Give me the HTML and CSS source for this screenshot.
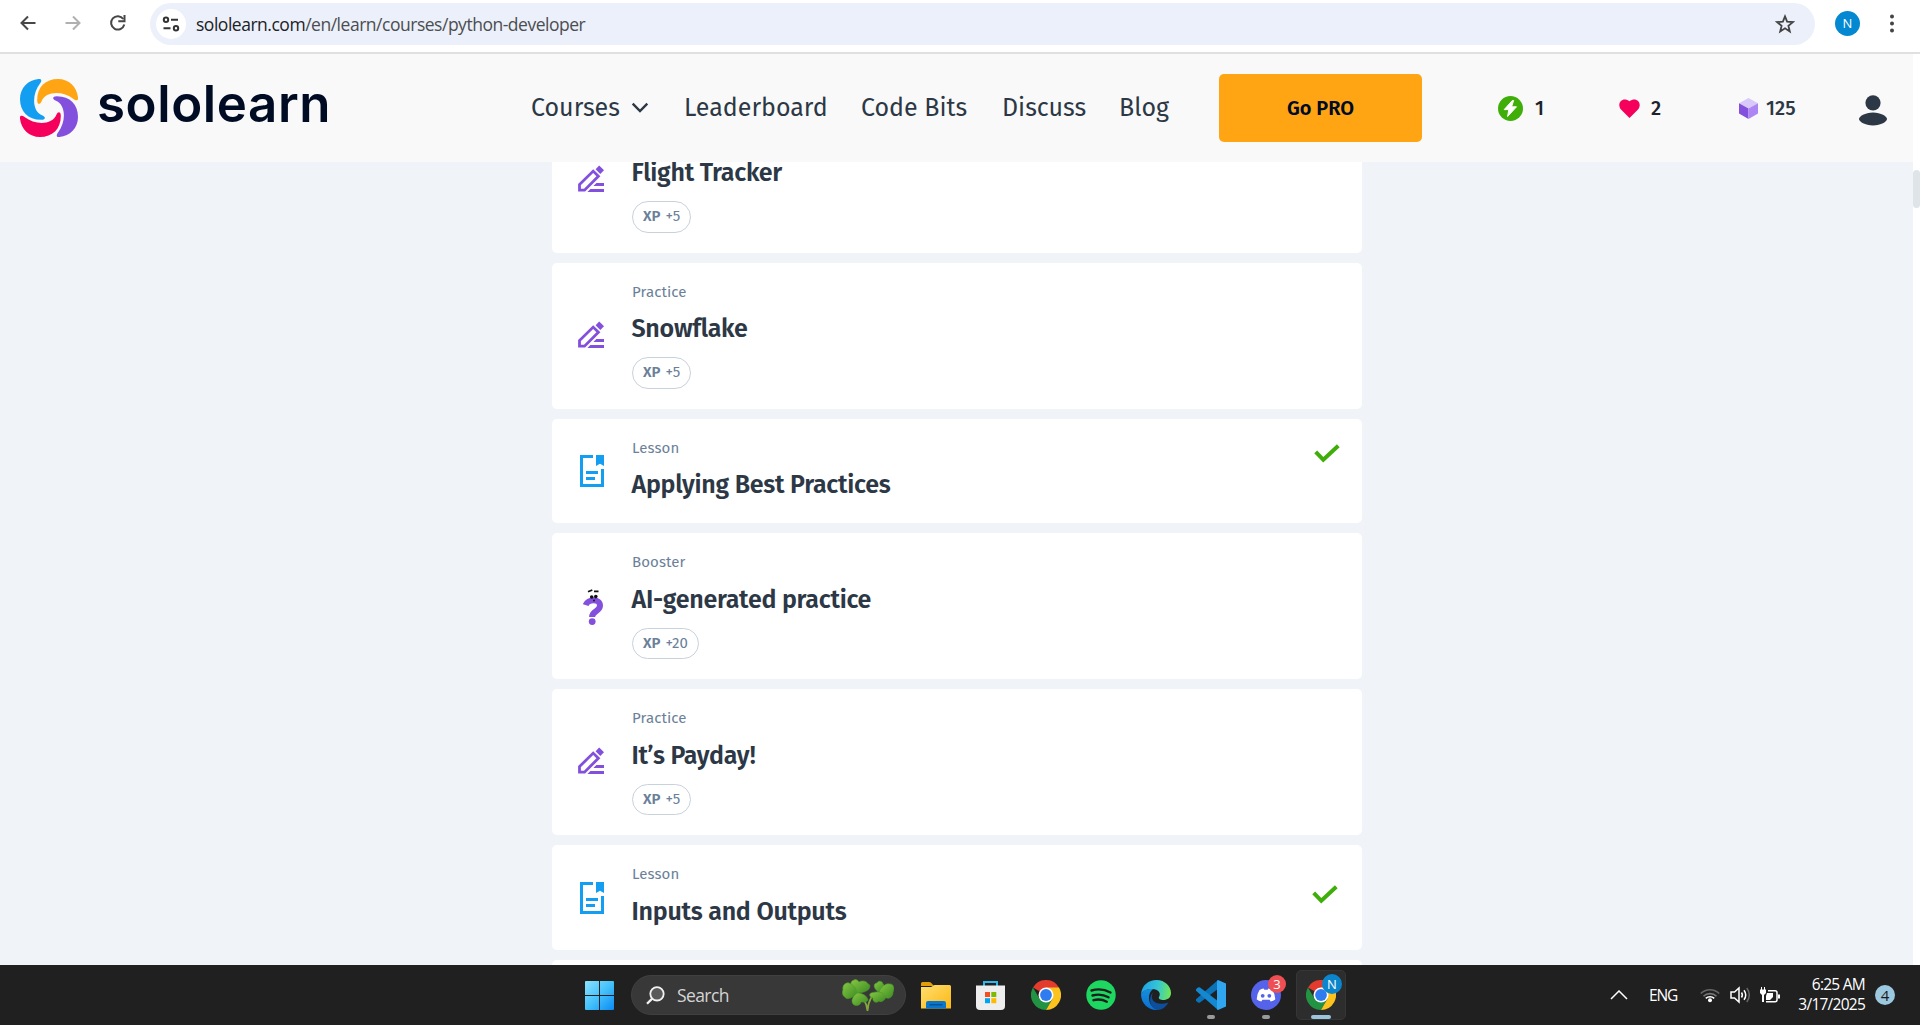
FILE: index.html
```
<!DOCTYPE html>
<html lang="en">
<head>
<meta charset="utf-8">
<title>Python Developer</title>
<link rel="stylesheet" href="styles.css">
</head>
<body>
<svg class="defs" width="0" height="0" aria-hidden="true">
  <defs>
    <symbol id="pencil" viewBox="0 0 26 27">
      <path d="M17.6 4.2 21.2.5 26 5.3 22.3 9Z" fill="#8250dc"/>
      <path d="M1.5 25.2V19.6L15.2 6.1 20.4 11.2 6.5 25.2Z" fill="none" stroke="#8250dc" stroke-width="2.8"/>
      <path d="M18.4 18H26v3H15.4ZM12.4 24H26v3H9.4Z" fill="#8250dc"/>
    </symbol>
    <symbol id="lesson" viewBox="0 0 24 32">
      <path d="M13 1.5H1.5v29h21V14" fill="none" stroke="#149ef2" stroke-width="3"/>
      <path d="M16 0h8v11l-4-2.2-4 2.2ZM6 16h12v3H6ZM6 22h9v3H6Z" fill="#149ef2"/>
    </symbol>
    <symbol id="check" viewBox="0 0 26 19">
      <path d="M1.7 7.8 9.3 15.8 24.3 1.8" fill="none" stroke="#3fae09" stroke-width="4"/>
    </symbol>
    <symbol id="chrome" viewBox="0 0 30 30">
      <path d="M15 15 2 7.5A15 15 0 0 1 28 7.5Z" fill="#e33b2e"/>
      <path d="M2 7.5A15 15 0 0 0 15 30L21.5 18.7 8.5 18.7Z" fill="#229342"/>
      <path d="M28 7.5A15 15 0 0 1 15 30L21.5 18.7 15 7.5Z" fill="#fcc31e"/>
      <circle cx="15" cy="15" r="7.5" fill="#fff"/>
      <circle cx="15" cy="15" r="5.9" fill="#2f7cf0"/>
    </symbol>
  </defs>
</svg>

<div class="toolbar">
  <svg class="tb-back" width="18" height="18" viewBox="0 0 18 18"><path d="M16.5 9H3M9 2.5 2.5 9 9 15.5" fill="none" stroke="#474747" stroke-width="2"/></svg>
  <svg class="tb-forward" width="18" height="18" viewBox="0 0 18 18"><path d="M1.5 9H15M9 2.5 15.500 9 9 15.500" fill="none" stroke="#b0b0b0" stroke-width="2"/></svg>
  <svg class="tb-reload" width="18" height="18" viewBox="0 0 18 18"><path d="M14.3 5A6.700 6.700 0 1 0 15.300 10.500" fill="none" stroke="#474747" stroke-width="2"/><path d="M15.500 1v6.200H9.300" fill="none" stroke="#474747" stroke-width="2"/></svg>
  <div class="omnibox">
    <span class="site-info">
      <svg width="18" height="16" viewBox="0 0 18 16" fill="none" stroke="#333" stroke-width="2"><circle cx="4" cy="3.700" r="2.200"/><path d="M9 3.700h7M1.500 12.300h7"/><circle cx="14" cy="12.300" r="2.200"/></svg>
    </span>
    <span class="url">sololearn.com<span class="url-path">/en/learn/courses/python-developer</span></span>
    <svg class="star" width="20" height="20" viewBox="0 0 20 20"><path d="m10 2.400 2.100 5.300 5.700.4-4.400 3.700 1.400 5.600L10 14.300 5.200 17.400l1.400-5.600L2.200 8.100l5.700-.4Z" fill="none" stroke="#444" stroke-width="1.800"/></svg>
  </div>
  <span class="profile">N</span>
  <svg class="kebab" width="6" height="20" viewBox="0 0 6 20" fill="#444"><circle cx="3" cy="2.500" r="2"/><circle cx="3" cy="9.500" r="2"/><circle cx="3" cy="16.500" r="2"/></svg>
</div>

<div class="viewport">
<div class="page">
  <header class="header">
    <div class="brand">
      <svg width="58" height="58" viewBox="0 0 58 58">
        <defs><path id="blade" d="M18.500 0C22-.4 21.800 2.200 20 4.500 11.500 15.500 12 32.500 22.500 36.500 26 38 25.500 40.800 21.500 40.800 8 41 0 32.500 0 20 0 9 8 1 18.500 0Z"/></defs>
        <use href="#blade" fill="#149ef2"/>
        <use href="#blade" fill="#ffa514" transform="rotate(90 29 29)"/>
        <use href="#blade" fill="#8250dc" transform="rotate(180 29 29)"/>
        <use href="#blade" fill="#f5005a" transform="rotate(270 29 29)"/>
      </svg>
      <span class="wordmark">sololearn</span>
    </div>
    <nav class="nav">
      <a class="nav-courses">Courses <svg width="18" height="11" viewBox="0 0 18 11"><path d="M1.700 1.700 9 9l7.300-7.300" fill="none" stroke="#2d3846" stroke-width="2.400"/></svg></a>
      <a>Leaderboard</a>
      <a>Code Bits</a>
      <a>Discuss</a>
      <a>Blog</a>
    </nav>
    <button class="pro">Go PRO</button>
    <div class="stats">
      <span class="stat stat-streak"><svg width="25" height="25" viewBox="0 0 25 25"><circle cx="12.500" cy="12.500" r="12.500" fill="#3fae09"/><path d="M14.300 4.500 6.200 13.600h4.600L9.600 20.500l8.900-9.700h-4.900l2-6.300Z" fill="#fff" stroke="#fff" stroke-linejoin="round"/></svg>1</span>
      <span class="stat stat-hearts"><svg width="21" height="19" viewBox="0 0 21 19"><path d="M10.500 19 2 10.500C-3 4 4-3 10.500 2.300 17-3 24 4 19 10.500Z" fill="#f5005a"/></svg>2</span>
      <span class="stat stat-bits"><svg width="19" height="21" viewBox="0 0 19 21"><path d="M9.500 0 19 5.200 9.500 10.500 0 5.200Z" fill="#d9c8fa"/><path d="M0 5.200 9.500 10.500V21L0 15.500Z" fill="#8250dc"/><path d="M19 5.200 9.500 10.500V21L19 15.500Z" fill="#ad85f5"/></svg>125</span>
    </div>
    <svg class="user" width="28" height="31" viewBox="0 0 28 31" fill="#2d3846"><circle cx="14" cy="7.800" r="7.600"/><path d="M14 17.500c8 0 14 4 14 6.500S22 30.500 14 30.500 0 26.500 0 24s6-6.500 14-6.500Z"/></svg>
  </header>

  <main class="lessons">
    <article class="card">
      <svg class="icon" width="26" height="27"><use href="#pencil"/></svg>
      <div class="body"><p class="kind">Practice</p><h3>Flight Tracker</h3><span class="xp"><b>XP</b>+5</span></div>
    </article>
    <article class="card">
      <svg class="icon" width="26" height="27"><use href="#pencil"/></svg>
      <div class="body"><p class="kind">Practice</p><h3>Snowflake</h3><span class="xp"><b>XP</b>+5</span></div>
    </article>
    <article class="card card-short">
      <svg class="icon icon-lesson" width="24" height="32"><use href="#lesson"/></svg>
      <div class="body"><p class="kind">Lesson</p><h3>Applying Best Practices</h3></div>
      <svg class="done" width="26" height="19"><use href="#check"/></svg>
    </article>
    <article class="card card-low">
      <svg class="icon icon-booster" width="21" height="36" viewBox="0 0 21 36">
        <path d="M2.700 16.200C4.700 9.800 17 9.500 17 16.600c0 6-7.900 5.400-7.900 11.400" fill="none" stroke="#8250dc" stroke-width="6"/>
        <circle cx="9.200" cy="32.600" r="3.400" fill="#8250dc"/>
        <path d="M5 2.800 9.300 1M11 2.300h4.500" stroke="#111" stroke-width="1.700" fill="none"/>
        <circle cx="8.700" cy="8" r="1.800" fill="#111"/><circle cx="12.800" cy="7.600" r="1.800" fill="#111"/><circle cx="11" cy="11.500" r=".9" fill="#111"/>
      </svg>
      <div class="body"><p class="kind">Booster</p><h3>AI-generated practice</h3><span class="xp"><b>XP</b>+20</span></div>
    </article>
    <article class="card card-low">
      <svg class="icon" width="26" height="27"><use href="#pencil"/></svg>
      <div class="body"><p class="kind">Practice</p><h3>It’s Payday!</h3><span class="xp"><b>XP</b>+5</span></div>
    </article>
    <article class="card card-short card-low card-last">
      <svg class="icon icon-lesson" width="24" height="32"><use href="#lesson"/></svg>
      <div class="body"><p class="kind">Lesson</p><h3>Inputs and Outputs</h3></div>
      <svg class="done" width="26" height="19"><use href="#check"/></svg>
    </article>
    <article class="card"></article>
  </main>
</div>
<div class="scrollbar"><span class="thumb"></span></div>
</div>

<footer class="taskbar">
  <div class="apps">
    <svg class="start" width="29" height="29" viewBox="0 0 29 29">
      <defs><linearGradient id="win" x1="0" y1="0" x2="29" y2="29" gradientUnits="userSpaceOnUse"><stop offset="0" stop-color="#8be3ff"/><stop offset=".5" stop-color="#45c1fb"/><stop offset="1" stop-color="#0b8bf5"/></linearGradient></defs>
      <path d="M0 1q0-1 1-1H14v14H0ZM15 0H28q1 0 1 1V14H15ZM0 15H14V29H1q-1 0-1-1ZM15 15H29V28q0 1-1 1H15Z" fill="url(#win)"/>
    </svg>
    <div class="search">
      <svg width="19" height="19" viewBox="0 0 19 19"><circle cx="11" cy="7.800" r="6.700" fill="#5a5a5a" stroke="#f2f2f2" stroke-width="1.800"/><path d="M6.200 12.600 1 17.800" stroke="#f2f2f2" stroke-width="2.200"/></svg>
      <span>Search</span>
      <svg class="clover" width="52" height="33" viewBox="0 0 52 33">
        <defs><linearGradient id="leaf" x1="0" y1="0" x2="1" y2="1"><stop offset="0" stop-color="#86c844"/><stop offset="1" stop-color="#3c8a22"/></linearGradient></defs>
        <path d="M15 13q9 6 10.500 19M36 13q-9.500 4-10.500 19" fill="none" stroke="#84a83e" stroke-width="1.700"/>
        <g fill="url(#leaf)" stroke="#4a9a2a" stroke-width=".6">
          <path d="M15 14C8 9 7 2 12 1c2-1 4 0 5 2 3-2 8-1 9 2 2 0 3 3 0 6-3 2-7 3-11 3Z"/>
          <path d="M15 14C10 20 4 21 3 18 0 17 0 12 1 11 0 6 4 3 7 4c5 2 7 5 8 10Z"/>
          <path d="M15 14c6 0 10 3 11 7-2 3-5 2-7 2 0 3-5 5-8 2-2-3-1-7 4-11Z"/>
          <path d="M37 13c-6-3-6-9-2-9 1-3 6-2 6 1 3 2 0 6-4 8Z"/>
          <path d="M37 13c2-5 7-9 10-8 5-1 6 5 4 8 0 5-4 7-6 6-3 0-6-2-8-6Z"/>
          <path d="M37 13c6 1 8 6 5 8-2 2-4 2-5 1-3 3-7 0-6-3-4-1-4-4-2-5 3-1 5-1 8-1Z"/>
        </g>
      </svg>
    </div>
    <div class="slot">
      <svg width="30" height="28" viewBox="0 0 30 28">
        <defs><linearGradient id="fold" x1="0" y1="0" x2="1" y2="1"><stop offset="0" stop-color="#ffdf70"/><stop offset="1" stop-color="#fcb714"/></linearGradient></defs>
        <path d="M0 2.500Q0 1 1.500 1H8q1.500 0 2.500 1.200L13 5H0Z" fill="#e0a00c"/><path d="M0 6h10l3.500-2H28.500Q30 4 30 5.500V27.500H0Z" fill="url(#fold)"/>
        <path d="M5 27.500V22q0-2 2-2H23q2 0 2 2v5.500Z" fill="#0a76cc"/><path d="M8.500 23.800h13" stroke="#054a8c" stroke-width="1.200"/>
      </svg>
    </div>
    <div class="slot">
      <svg width="29" height="29" viewBox="0 0 29 29">
        <path d="M8 5V1H21V5" fill="none" stroke="#2cb8ee" stroke-width="2"/>
        <path d="M0 4.500H29V25q0 4-4 4H4q-4 0-4-4Z" fill="#eee"/>
        <path d="M9 11h5v5H9Z" fill="#f25022"/><path d="M15.300 11h5v5h-5Z" fill="#7fba00"/><path d="M9 17.200h5v5H9Z" fill="#00a4ef"/><path d="M15.300 17.200h5v5h-5Z" fill="#ffb900"/>
      </svg>
    </div>
    <div class="slot"><svg width="30" height="30"><use href="#chrome"/></svg></div>
    <div class="slot">
      <svg width="30" height="30" viewBox="0 0 30 30"><circle cx="15" cy="15" r="14.700" fill="#1ed760"/><path d="M5.500 10.500q10-3 19 2M6.500 15.500q8.500-2.500 16 1.800M7.500 20.200q7-2 13.300 1.500" fill="none" stroke="#1c1f1d" stroke-width="2.400" stroke-linecap="round"/></svg>
    </div>
    <div class="slot">
      <svg width="30" height="30" viewBox="0 0 30 30">
        <defs><linearGradient id="e1" x1="0" y1=".3" x2="1" y2=".4"><stop offset="0" stop-color="#1f9fe5"/><stop offset=".55" stop-color="#35c5d6"/><stop offset="1" stop-color="#6ee757"/></linearGradient><linearGradient id="e2" x1="0" y1="0" x2="0" y2="1"><stop offset="0" stop-color="#168fdc"/><stop offset="1" stop-color="#0a6fd0"/></linearGradient></defs>
        <path d="M0 14C1 5 7.500 0 15.500 0 24 0 30 6.500 30 13c0 5-4 7-7.500 7-3 0-5.500-1.300-4.500-3 2.500-4-1-8-6.500-8C6 9 2 11 0 14Z" fill="url(#e1)"/>
        <path d="M0 14C2 10.500 7 8.500 12 9c-3 2.500-4 5-4 9 0 6 4 11 9.500 11.800C8 31 0 24 0 14Z" fill="url(#e2)"/>
        <path d="M12 12.500c-4.500 9 5 13.500 15.500 10C25 27 21 30 16.500 30 9 28.500 6.500 18 12 12.500Z" fill="#0d4f9c"/>
      </svg>
    </div>
    <div class="slot">
      <svg width="30" height="30" viewBox="0 0 30 30">
        <path d="M22 0 0 19.300Q-.5 20.500.5 21.300L2 22.400q1 .6 2 0L22.500 8.500Z" fill="#0b72b8"/>
        <path d="M22 30 0 10.700Q-.5 9.500.5 8.700L2 7.600q1-.6 2 0L22.500 21.500Z" fill="#1488d0"/>
        <path d="M22 0 30 3.500V26.500L22 30Q21 29.500 21 28.500V1.500Q21 .5 22 0Z" fill="#30a6f0"/>
      </svg>
      <i class="dot"></i>
    </div>
    <div class="slot">
      <svg width="30" height="30" viewBox="0 0 30 30"><circle cx="15" cy="15" r="15" fill="#5562ea"/><path d="M8.500 10q2-1.300 4.200-1.500l.6 1.300h3.400l.6-1.300Q19.500 8.700 21.500 10q3 4.800 2.700 9.500-2 1.500-4.500 2.100l-1.100-1.900h-7.200l-1.100 1.900Q7.800 21 5.800 19.500 5.500 14.800 8.500 10Z" fill="#fff"/><circle cx="11.700" cy="15.800" r="1.900" fill="#5562ea"/><circle cx="18.300" cy="15.800" r="1.900" fill="#5562ea"/></svg>
      <span class="badge badge-red">3</span>
      <i class="dot"></i>
    </div>
    <div class="slot active">
      <svg width="30" height="30"><use href="#chrome"/></svg>
      <span class="badge badge-blue">N</span>
      <i class="dot dot-wide"></i>
    </div>
  </div>
  <div class="tray">
    <svg width="18" height="10" viewBox="0 0 18 10"><path d="M1 9 9 1l8 8" fill="none" stroke="#fff" stroke-width="1.500"/></svg>
    <span class="lang">ENG</span>
    <svg class="wifi" width="20" height="16" viewBox="0 0 20 16" fill="none" stroke-width="1.600"><path d="M.8 6.500a13 13 0 0 1 18.400 0" stroke="#666"/><path d="M3.500 9.300a9.200 9.200 0 0 1 13 0" stroke="#777"/><path d="M5.800 11.400a6 6 0 0 1 8.400 0" stroke="#fff"/><circle cx="10" cy="13.300" r="2" fill="#fff"/></svg>
    <svg class="volume" width="21" height="18" viewBox="0 0 21 18" fill="none" stroke="#fff" stroke-width="1.500"><path d="M1 6h3.500L9 2v14l-4.500-4H1Z"/><path d="M11.500 6.500q1.700 2.500 0 5M14 4.200q3.500 4.800 0 9.600"/><path d="M16.800 2q5 7 0 14" stroke="#666"/></svg>
    <svg class="battery" width="20" height="17" viewBox="0 0 20 17"><path d="M8 3.800H15q2 0 2 2v7q0 2-2 2H6" fill="none" stroke="#fff" stroke-width="1.500"/><path d="M18 7.500h2v4h-2ZM7 6h6v4l-3 3H6V9Z" fill="#fff"/><path d="M0 2.500h1V0H2v2.500h2V0H5v2.500h1V6L4 8v7H2V8L0 6Z" fill="#fff"/></svg>
    <div class="clock"><span>6:25 AM</span><span class="date">3/17/2025</span></div>
    <span class="notices">4</span>
  </div>
</footer>
</body>
</html>
```
FILE: styles.css
```
* { box-sizing: border-box; }
body {
  margin: 0;
  height: 1025px;
  display: flex;
  flex-direction: column;
  overflow: hidden;
  background: #fff;
  font-family: "Fira Sans", "Noto Sans", sans-serif;
  color: #2d3846;
}
svg { display: block; flex: none; }
.defs { position: absolute; }

/* browser toolbar */
.toolbar {
  flex: none;
  height: 54px;
  padding: 0 25px 6px 19px;
  display: flex;
  align-items: center;
  border-bottom: 2px solid #e0e0e0;
  font-family: "Open Sans", sans-serif;
}
.tb-forward { margin-left: 27px; }
.tb-reload { margin-left: 27px; }
.omnibox {
  width: 1665px;
  height: 42px;
  margin-left: 23px;
  margin-top: 1px;
  padding: 0 20px 0 6px;
  border-radius: 21px;
  background: #ebf0fa;
  display: flex;
  align-items: center;
}
.site-info {
  width: 30px;
  height: 30px;
  border-radius: 50%;
  background: #fff;
  display: flex;
  align-items: center;
  justify-content: center;
}
.url {
  margin-left: 10px;
  padding-top: 1px;
  font-size: 17.5px;
  letter-spacing: -0.48px;
  color: #202124;
}
.url-path { color: #4b4d50; }
.star { margin-left: auto; }
.profile {
  width: 25px;
  height: 25px;
  margin-left: 20px;
  border-radius: 50%;
  background: #0388d1;
  color: #fff;
  font-size: 13px;
  line-height: 25px;
  text-align: center;
}
.kebab { margin: 2px 0 0 29px; }

/* page */
.viewport { flex: 1; min-height: 0; display: flex; }
.page { width: 1913px; background: #f0f4f8; display: flex; flex-direction: column; min-height: 0; overflow: hidden; }
.scrollbar { width: 7px; padding-top: 116px; }
.thumb { display: block; height: 38px; border-radius: 4px; background: #dfe4e8; }

.header {
  position: relative;
  z-index: 1;
  flex: none;
  height: 108px;
  padding-left: 20px;
  background: #f9f9f9;
  display: flex;
  align-items: center;
}
.brand { width: 511px; display: flex; align-items: center; }
.wordmark {
  margin: -9px 0 0 19px;
  font: 600 51px/60px Inter, sans-serif;
  letter-spacing: 0.6px;
  color: #000b24;
}
.nav {
  width: 688px;
  display: grid;
  grid-template-columns: 153px 177px 141px 117px 100px;
  font-size: 25px;
  line-height: 32px;
}
.nav a { padding-bottom: 1px; white-space: nowrap; }
.nav-courses { display: flex; align-items: center; gap: 11px; }
.pro {
  width: 203px;
  height: 68px;
  border: 0;
  border-radius: 5px;
  background: #ffa514;
  color: #000b24;
  font: 600 20px "Fira Sans", "Noto Sans", sans-serif;
}
.stats { display: flex; width: 437px; padding-left: 76px; }
.stat { display: flex; align-items: center; font-size: 20px; font-weight: 500; }
.stat-streak { gap: 12px; width: 121px; color: #1c222b; }
.stat-hearts { gap: 11px; width: 120px; color: #1c222b; }
.stat-bits { gap: 8px; }
.user { margin-top: 4px; }

/* lesson list */
.lessons {
  width: 810px;
  margin: -55px 0 0 552px;
  display: flex;
  flex-direction: column;
  gap: 10px;
}
.card {
  flex: none;
  height: 146px;
  padding: 19px 22px 0 26px;
  border-radius: 5px;
  background: #fff;
  display: flex;
}
.card-short { height: 104px; }
.card-last { height: 105px; }
.icon { margin: 39px 28px 0 0; }
.icon-lesson { margin: 17px 28px 0 2px; }
.icon-booster { margin: 37px 28px 0 5px; }
.card-last .icon { margin-top: 18px; }
.body { flex: 1; }
.kind {
  margin: 0;
  font-size: 15px;
  line-height: 20px;
  letter-spacing: 0.1px;
  color: #6b7f99;
}
h3 { margin: 12px 0 13px -0.5px; font-size: 25px; line-height: 30px; font-weight: 600; letter-spacing: -0.27px; }
.card-low h3 { margin-top: 13px; }
.xp {
  display: inline-flex;
  gap: 5px;
  height: 32px;
  padding: 0 10px;
  border: 1px solid #c8d2db;
  border-radius: 16px;
  font-size: 15px;
  line-height: 29px;
  color: #6b7f99;
}
.card-low .xp { height: 31px; }
.xp b { font-weight: 600; }
.done { margin-top: 6px; }
.card-last .done { margin: 21px 2px 0 0; }

/* taskbar */
.taskbar {
  flex: none;
  height: 60px;
  padding: 0 25px 0 585px;
  background: #202020;
  color: #fff;
  display: flex;
  justify-content: space-between;
  font-family: "Open Sans", sans-serif;
}
.apps, .tray { display: flex; align-items: center; }
.search {
  width: 275px;
  height: 40px;
  margin: 0 2px 0 17px;
  padding: 0 11px 0 14px;
  border-radius: 20px;
  background: #383838;
  border: 1px solid #404040;
  display: flex;
  align-items: center;
  font-size: 17.5px;
  letter-spacing: -0.6px;
  color: #d4d4d4;
}
.search span { margin-left: 12px; }
.clover { margin-left: auto; }
.slot {
  position: relative;
  width: 55px;
  height: 60px;
  display: flex;
  align-items: center;
  justify-content: center;
}
.active { width: 50px; height: 50px; margin-left: 3px; border-radius: 5px; background: #2d2d2d; border: 1px solid #363636; }
.dot {
  position: absolute;
  left: 50%;
  bottom: 6px;
  width: 8px;
  height: 4px;
  margin-left: -4px;
  border-radius: 2px;
  background: #9a9a9a;
}
.dot-wide { width: 20px; margin-left: -10px; bottom: 0; background: #9ac6dc; }
.badge {
  position: absolute;
  left: 30px;
  top: 10px;
  width: 18px;
  height: 18px;
  border-radius: 50%;
  font-size: 13px;
  line-height: 18px;
  text-align: center;
}
.badge-red { background: #ed4f55; }
.badge-blue { background: #0b86cc; left: 25px; top: 3px; width: 20px; height: 20px; line-height: 20px; }
.lang { width: 28px; margin-left: 21px; font-size: 15.5px; letter-spacing: -1.1px; }
.wifi { margin-left: 23px; }
.volume { margin-left: 10px; }
.battery { margin-left: 9px; }
.clock {
  width: 85px;
  margin-top: -2px;
  display: flex;
  flex-direction: column;
  align-items: flex-end;
  font-size: 15.5px;
  line-height: 20px;
  letter-spacing: -0.75px;
}
.notices {
  width: 20px;
  height: 20px;
  margin-left: 10px;
  border-radius: 50%;
  background: #9dc9e0;
  color: #1a1a1a;
  font-size: 15px;
  line-height: 20px;
  text-align: center;
}
```
